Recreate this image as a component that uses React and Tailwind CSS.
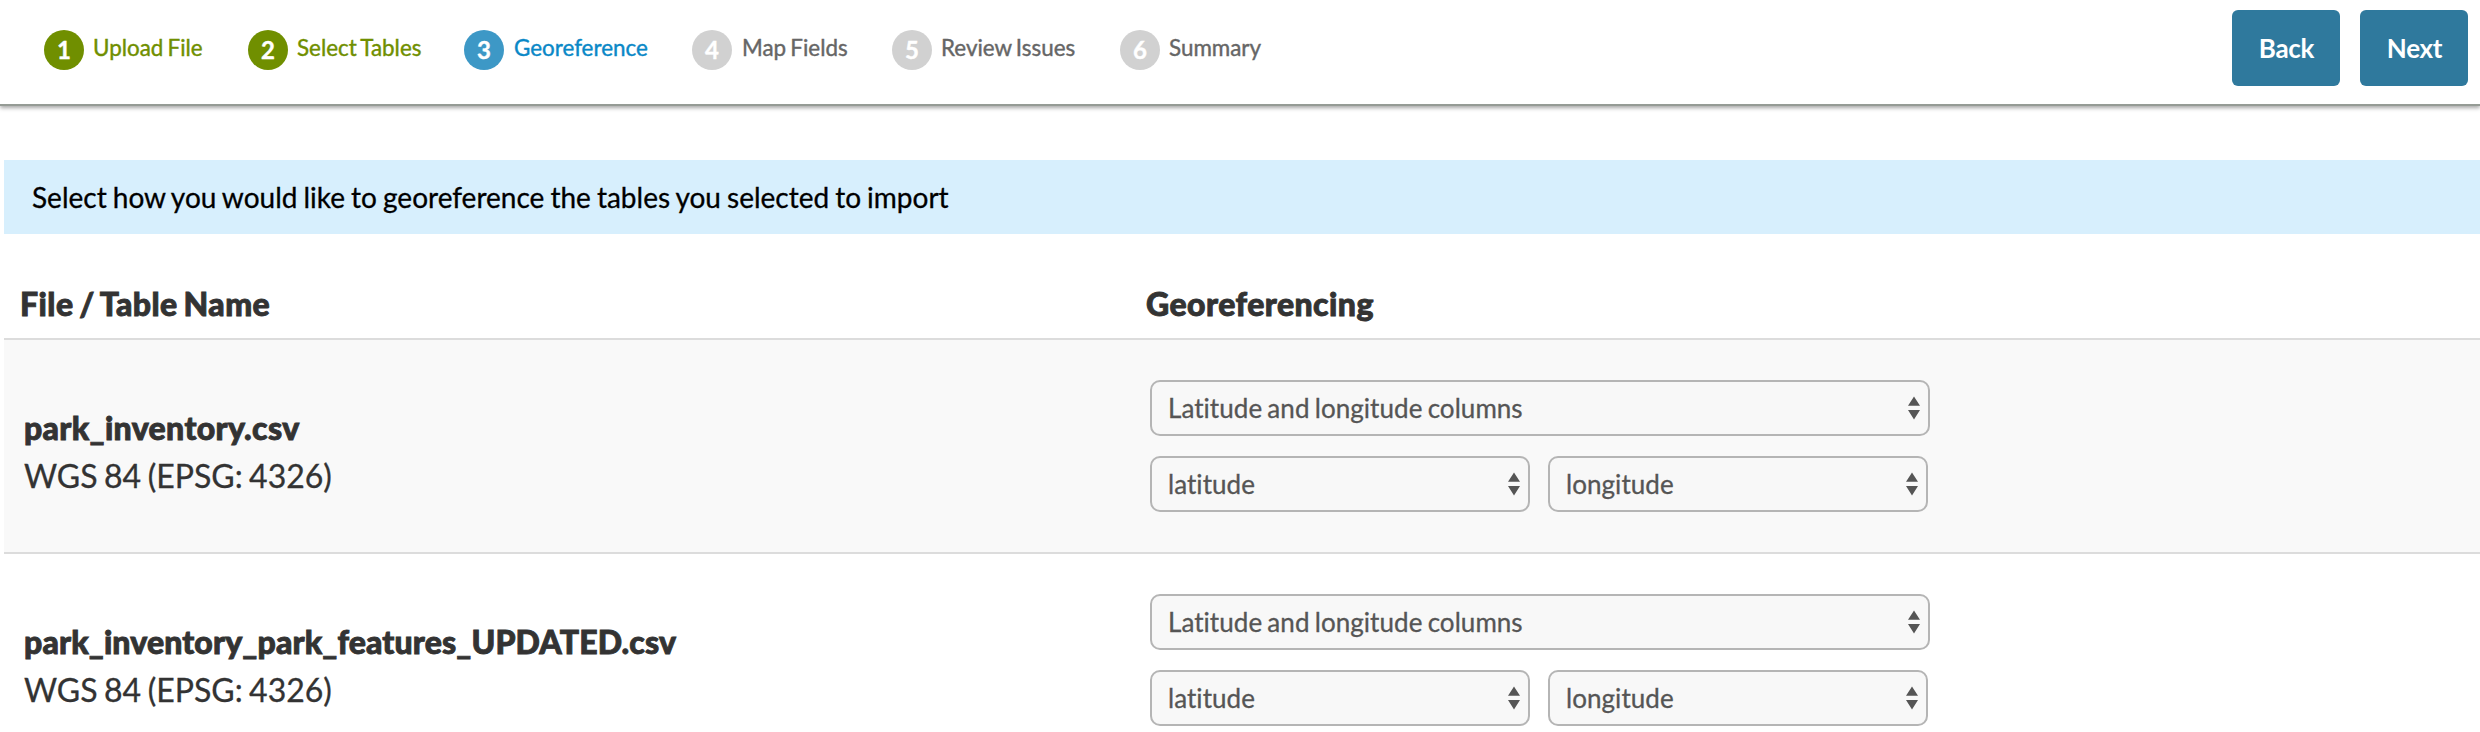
const steps = [
  { n: 1, label: "Upload File", circle: "bg-[#708f00]", text: "text-[#708f00]", box: "w-[204px]", pad: "ml-[9px]" },
  { n: 2, label: "Select Tables", circle: "bg-[#708f00]", text: "text-[#708f00]", box: "w-[216px]", pad: "ml-[9px]" },
  { n: 3, label: "Georeference", circle: "bg-[#3d98c6]", text: "text-[#0a88c7]", box: "w-[228px]", pad: "ml-[10px]" },
  { n: 4, label: "Map Fields", circle: "bg-[#d1d1d1]", text: "text-[#666666]", box: "w-[200px]", pad: "ml-[10px]" },
  { n: 5, label: "Review Issues", circle: "bg-[#d1d1d1]", text: "text-[#666666]", box: "w-[228px]", pad: "ml-[9px]" },
  { n: 6, label: "Summary", circle: "bg-[#d1d1d1]", text: "text-[#666666]", box: "w-[200px]", pad: "ml-[9px]" },
];

const tables = [
  { name: "park_inventory.csv", shade: "bg-[#f9f9f9]", tracking: "tracking-[0.35px]" },
  { name: "park_inventory_park_features_UPDATED.csv", shade: "bg-white", tracking: "tracking-[0.14px]" },
];

function Step({ step }) {
  return (
    <li className={`flex h-10 shrink-0 items-center ${step.box}`}>
      <span className={`flex size-10 shrink-0 items-center justify-center rounded-full text-2xl font-bold text-white [-webkit-text-stroke:0.4px_currentColor] ${step.circle}`}>
        {step.n}
      </span>
      <span className={`-mt-1 whitespace-nowrap text-[22.4px] [word-spacing:-1.5px] [-webkit-text-stroke:0.4px_currentColor] ${step.pad} ${step.text}`}>{step.label}</span>
    </li>
  );
}

function ActionButton({ children }) {
  return (
    <button className="h-[76px] w-[108px] rounded-md bg-[#2f799d] pl-px text-[26px] font-bold tracking-[-0.3px] text-white">{children}</button>
  );
}

function SelectBox({ label, width }) {
  return (
    <div className={`flex h-14 items-center justify-between rounded-[10px] border-2 border-[#b5b5b5] bg-[#f8f8f8] pl-4 pr-2 text-[26px] text-[#555555] ${width}`}>
      <span className="whitespace-nowrap tracking-[0.05px] [word-spacing:-1.5px] [-webkit-text-stroke:0.3px_currentColor]">{label}</span>
      <svg className="h-6 w-3" viewBox="0 0 12 24" fill="#555555">
        <path d="M6 0.5L12 9.7H0zM0 14H12L6 23.5z" />
      </svg>
    </div>
  );
}

export default function App() {
  return (
    <div className="flex h-[732px] w-[2480px] flex-col overflow-hidden bg-white font-['Lato',sans-serif] [font-variant-ligatures:none]">
      <header className="flex h-[106px] shrink-0 justify-between border-b-2 border-[#959b95] pl-11 pr-3 shadow-[0_2px_4px_rgba(0,0,0,0.35)]">
        <ol className="flex pt-[30px]">
          {steps.map((step) => (
            <Step key={step.n} step={step} />
          ))}
        </ol>
        <div className="flex gap-5 pt-2.5">
          <ActionButton>Back</ActionButton>
          <ActionButton>Next</ActionButton>
        </div>
      </header>

      <main className="ml-1 mt-[54px] flex flex-col">
        <p className="flex h-[74px] items-center bg-[#d7effd] pl-7 text-[28px] text-black">
          <span className="[word-spacing:-1.1px] [-webkit-text-stroke:0.3px_currentColor]">Select how you would like to georeference the tables you selected to import</span>
        </p>
        <div className="mt-9 grid h-[70px] grid-cols-[1126px_1fr] border-b-2 border-[#dcdcdc] text-[32px] font-black leading-[68px] tracking-[0.46px] text-[#333333] [-webkit-text-stroke:0.9px_currentColor]">
          <h2 className="pl-4 [word-spacing:-2.3px]">File / Table Name</h2>
          <h2 className="pl-4">Georeferencing</h2>
        </div>
        {tables.map((table) => (
          <section key={table.name} className={`grid h-[214px] grid-cols-[1146px_1fr] border-b-2 border-[#dcdcdc] text-[32px] leading-[48px] text-[#333333] ${table.shade}`}>
            <div className="pl-5 pt-[64px]">
              <h3 className={`font-black [-webkit-text-stroke:0.9px_currentColor] ${table.tracking}`}>{table.name}</h3>
              <p className="[word-spacing:-1.7px] [-webkit-text-stroke:0.3px_currentColor]">WGS 84 (EPSG: 4326)</p>
            </div>
            <div className="flex flex-col gap-5 pt-10 leading-normal">
              <SelectBox label="Latitude and longitude columns" width="w-[780px]" />
              <div className="flex gap-[18px]">
                <SelectBox label="latitude" width="w-[380px]" />
                <SelectBox label="longitude" width="w-[380px]" />
              </div>
            </div>
          </section>
        ))}
      </main>
    </div>
  );
}
